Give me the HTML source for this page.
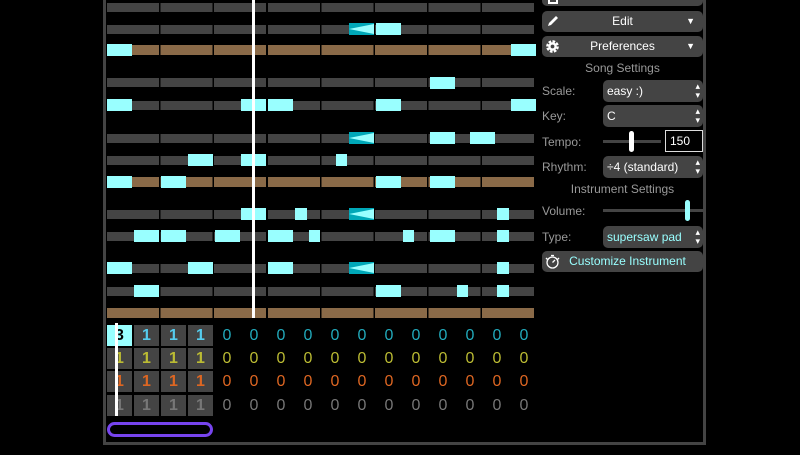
<!DOCTYPE html><html><head><style>
*{margin:0;padding:0;box-sizing:border-box}
body{width:800px;height:455px;background:#000;position:relative;overflow:hidden;font-family:"Liberation Sans",sans-serif}
.a{position:absolute}
.r{position:absolute;left:107px;width:429px;height:9px;background:repeating-linear-gradient(90deg,#444 0 52px,#000 52px 53.6px)}
.b{height:10px;background:repeating-linear-gradient(90deg,#8a6a48 0 52px,#000 52px 53.6px)}
.n{position:absolute;height:12px;background:#9ff}
.t{position:absolute;height:12px;width:25px;background:#00a8b8}
.t:after{content:"";position:absolute;left:0;top:0;width:100%;height:100%;background:#9ff;clip-path:polygon(100% 8%,0 50%,100% 92%)}
.c{position:absolute;width:25px;height:21px;background:#444;font-size:16px;font-weight:bold;text-align:center;line-height:21px}
.z{position:absolute;width:20px;text-align:center;font-size:16px;line-height:21px}
.btn{position:absolute;left:542px;width:161px;height:21px;background:#444;border-radius:5px;color:#fff;font-size:12px;text-align:center;line-height:21px}
.lbl{position:absolute;left:542px;color:#999;font-size:12px}
.sel{position:absolute;left:603px;width:100px;height:22px;background:#444;border-radius:5px;color:#fff;font-size:12px;line-height:22px;padding-left:4px}
.sel:after{content:"▴\A▾";white-space:pre;position:absolute;right:3px;top:2px;font-size:9px;line-height:9px;color:#fff}
.h{position:absolute;left:542px;width:161px;text-align:center;color:#999;font-size:12px}
</style></head><body>
<div class="a" style="left:103px;top:0;width:3px;height:445px;background:#444"></div>
<div class="a" style="left:703px;top:0;width:3px;height:445px;background:#444"></div>
<div class="a" style="left:103px;top:442px;width:603px;height:3px;background:#444"></div>

<div class="r" style="top:3px"></div>
<div class="r" style="top:25px"></div>
<div class="r b" style="top:45px"></div>
<div class="r" style="top:78px"></div>
<div class="r" style="top:101px"></div>
<div class="r" style="top:134px"></div>
<div class="r" style="top:156px"></div>
<div class="r b" style="top:177px"></div>
<div class="r" style="top:210px"></div>
<div class="r" style="top:232px"></div>
<div class="r" style="top:264px"></div>
<div class="r" style="top:287px"></div>
<div class="r b" style="top:308px"></div>

<div class="t" style="left:349px;top:23px"></div><div class="n" style="left:376px;top:23px;width:25px"></div>
<div class="n" style="left:107px;top:44px;width:25px"></div><div class="n" style="left:511px;top:44px;width:25px"></div>
<div class="n" style="left:430px;top:77px;width:25px"></div>
<div class="n" style="left:107px;top:99px;width:25px"></div><div class="n" style="left:241px;top:99px;width:25px"></div><div class="n" style="left:268px;top:99px;width:25px"></div><div class="n" style="left:376px;top:99px;width:25px"></div><div class="n" style="left:511px;top:99px;width:25px"></div>
<div class="t" style="left:349px;top:132px"></div><div class="n" style="left:430px;top:132px;width:25px"></div><div class="n" style="left:470px;top:132px;width:25px"></div>
<div class="n" style="left:188px;top:154px;width:25px"></div><div class="n" style="left:241px;top:154px;width:25px"></div><div class="n" style="left:336px;top:154px;width:11px"></div>
<div class="n" style="left:107px;top:176px;width:25px"></div><div class="n" style="left:161px;top:176px;width:25px"></div><div class="n" style="left:376px;top:176px;width:25px"></div><div class="n" style="left:430px;top:176px;width:25px"></div>
<div class="n" style="left:241px;top:208px;width:25px"></div><div class="n" style="left:295px;top:208px;width:12px"></div><div class="t" style="left:349px;top:208px"></div><div class="n" style="left:497px;top:208px;width:12px"></div>
<div class="n" style="left:134px;top:230px;width:25px"></div><div class="n" style="left:161px;top:230px;width:25px"></div><div class="n" style="left:215px;top:230px;width:25px"></div><div class="n" style="left:268px;top:230px;width:25px"></div><div class="n" style="left:309px;top:230px;width:11px"></div><div class="n" style="left:403px;top:230px;width:11px"></div><div class="n" style="left:430px;top:230px;width:25px"></div><div class="n" style="left:497px;top:230px;width:12px"></div>
<div class="n" style="left:107px;top:262px;width:25px"></div><div class="n" style="left:188px;top:262px;width:25px"></div><div class="n" style="left:268px;top:262px;width:25px"></div><div class="t" style="left:349px;top:262px"></div><div class="n" style="left:497px;top:262px;width:12px"></div>
<div class="n" style="left:134px;top:285px;width:25px"></div><div class="n" style="left:376px;top:285px;width:25px"></div><div class="n" style="left:457px;top:285px;width:11px"></div><div class="n" style="left:497px;top:285px;width:12px"></div>

<div class="a" style="left:252px;top:0;width:3px;height:318px;background:#fff"></div>

<div class="c" style="left:107px;top:325px;background:#9ff;color:#000">3</div>
<div class="c" style="left:134px;top:325px;color:#5ce">1</div><div class="c" style="left:161px;top:325px;color:#5ce">1</div><div class="c" style="left:188px;top:325px;color:#5ce">1</div>
<div class="c" style="left:107px;top:348px;color:#bb3">1</div><div class="c" style="left:134px;top:348px;color:#bb3">1</div><div class="c" style="left:161px;top:348px;color:#bb3">1</div><div class="c" style="left:188px;top:348px;color:#bb3">1</div>
<div class="c" style="left:107px;top:371px;color:#d62">1</div><div class="c" style="left:134px;top:371px;color:#d62">1</div><div class="c" style="left:161px;top:371px;color:#d62">1</div><div class="c" style="left:188px;top:371px;color:#d62">1</div>
<div class="c" style="left:107px;top:395px;color:#777">1</div><div class="c" style="left:134px;top:395px;color:#777">1</div><div class="c" style="left:161px;top:395px;color:#777">1</div><div class="c" style="left:188px;top:395px;color:#777">1</div>
<div class="a" style="left:115px;top:323px;width:3px;height:93px;background:#fff"></div>

<div class="a" style="left:217px;top:325px;color:#2ab">
<span class="z" style="left:0">0</span><span class="z" style="left:27px">0</span><span class="z" style="left:54px">0</span><span class="z" style="left:81px">0</span><span class="z" style="left:108px">0</span><span class="z" style="left:135px">0</span><span class="z" style="left:162px">0</span><span class="z" style="left:189px">0</span><span class="z" style="left:216px">0</span><span class="z" style="left:243px">0</span><span class="z" style="left:270px">0</span><span class="z" style="left:297px">0</span></div>
<div class="a" style="left:217px;top:348px;color:#bb3">
<span class="z" style="left:0">0</span><span class="z" style="left:27px">0</span><span class="z" style="left:54px">0</span><span class="z" style="left:81px">0</span><span class="z" style="left:108px">0</span><span class="z" style="left:135px">0</span><span class="z" style="left:162px">0</span><span class="z" style="left:189px">0</span><span class="z" style="left:216px">0</span><span class="z" style="left:243px">0</span><span class="z" style="left:270px">0</span><span class="z" style="left:297px">0</span></div>
<div class="a" style="left:217px;top:371px;color:#d62">
<span class="z" style="left:0">0</span><span class="z" style="left:27px">0</span><span class="z" style="left:54px">0</span><span class="z" style="left:81px">0</span><span class="z" style="left:108px">0</span><span class="z" style="left:135px">0</span><span class="z" style="left:162px">0</span><span class="z" style="left:189px">0</span><span class="z" style="left:216px">0</span><span class="z" style="left:243px">0</span><span class="z" style="left:270px">0</span><span class="z" style="left:297px">0</span></div>
<div class="a" style="left:217px;top:395px;color:#777">
<span class="z" style="left:0">0</span><span class="z" style="left:27px">0</span><span class="z" style="left:54px">0</span><span class="z" style="left:81px">0</span><span class="z" style="left:108px">0</span><span class="z" style="left:135px">0</span><span class="z" style="left:162px">0</span><span class="z" style="left:189px">0</span><span class="z" style="left:216px">0</span><span class="z" style="left:243px">0</span><span class="z" style="left:270px">0</span><span class="z" style="left:297px">0</span></div>

<div class="a" style="left:107px;top:422px;width:106px;height:15px;border:3px solid #7744ee;border-radius:8px"></div>

<div class="btn" style="top:-15px"></div>
<div class="a" style="left:548px;top:-6px;width:10px;height:10px;border:2px solid #fff;border-top:none"></div>
<div class="btn" style="top:11px">Edit<span class="a" style="right:8px;top:0;font-size:9px">▼</span></div>
<svg class="a" style="left:546px;top:14px" width="14" height="14" viewBox="0 0 14 14"><path d="M2 12 L3 9 L10 2 L12 4 L5 11 Z" fill="#fff"/></svg>
<div class="btn" style="top:36px">Preferences<span class="a" style="right:8px;top:0;font-size:9px">▼</span></div>
<svg class="a" style="left:545px;top:39px" width="15" height="15" viewBox="0 0 16 16"><circle cx="8" cy="8" r="5" fill="none" stroke="#fff" stroke-width="3.5" stroke-dasharray="2.6 1.3"/><circle cx="8" cy="8" r="4.5" fill="#fff"/><circle cx="8" cy="8" r="2" fill="#444"/></svg>
<div class="h" style="top:61px">Song Settings</div>
<div class="lbl" style="top:84px">Scale:</div><div class="sel" style="top:80px">easy :)</div>
<div class="lbl" style="top:109px">Key:</div><div class="sel" style="top:105px">C</div>
<div class="lbl" style="top:135px">Tempo:</div>
<div class="a" style="left:603px;top:140px;width:58px;height:3px;background:#444"></div>
<div class="a" style="left:629px;top:131px;width:5px;height:21px;background:#fff;border-radius:3px"></div>
<div class="a" style="left:665px;top:130px;width:38px;height:22px;border:1px solid #ddd;color:#fff;font-size:12px;line-height:20px;padding-left:4px">150</div>
<div class="lbl" style="top:160px">Rhythm:</div><div class="sel" style="top:156px">÷4 (standard)</div>
<div class="h" style="top:182px">Instrument Settings</div>
<div class="lbl" style="top:204px">Volume:</div>
<div class="a" style="left:603px;top:209px;width:100px;height:3px;background:#444"></div>
<div class="a" style="left:685px;top:200px;width:5px;height:21px;background:#9ff;border-radius:3px"></div>
<div class="lbl" style="top:230px">Type:</div><div class="sel" style="top:226px;color:#9ff">supersaw pad</div>
<div class="btn" style="top:251px;color:#9ff;padding-left:10px">Customize Instrument</div>
<svg class="a" style="left:544px;top:253px" width="17" height="17" viewBox="0 0 17 17"><circle cx="8.5" cy="9.5" r="5.5" fill="none" stroke="#fff" stroke-width="1.3"/><path d="M8.5 9.5 L11 7 M7 2.5 H10 M2 5 L3.5 6.5 M15 5 L13.5 6.5" stroke="#fff" stroke-width="1.3" fill="none"/></svg>
</body></html>
